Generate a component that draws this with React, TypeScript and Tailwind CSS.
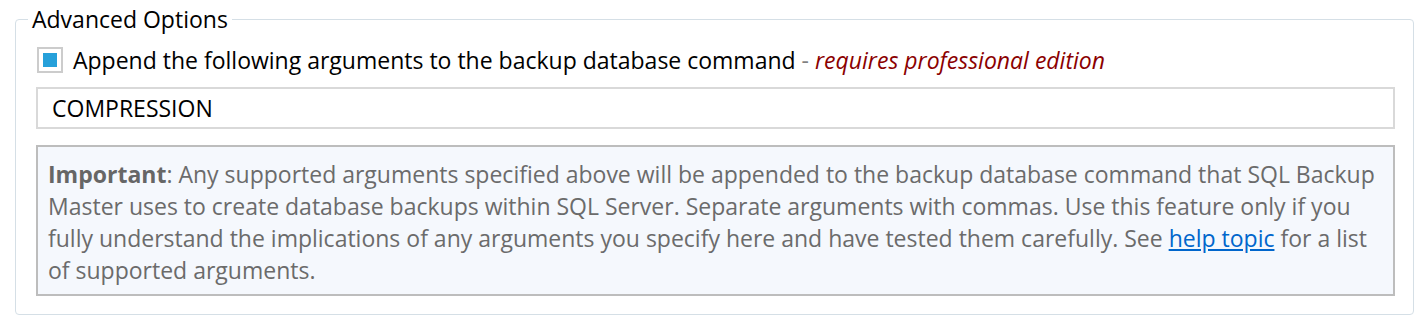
export default function App() {
  return (
    <div
      className="w-[1425px] h-[322px] bg-white pt-[6px] pl-[15px]"
      style={{ fontFamily: '"Open Sans", "Noto Sans", sans-serif' }}
    >
      <fieldset className="w-[1399px] h-[309px] border border-[#d5dfe6] rounded-[4px] pl-[20px] pr-[18px] m-0">
        <legend className="ml-[-8px] px-[4px] text-[23px] leading-[27px] text-black">
          Advanced Options
        </legend>

        <label className="flex items-center gap-[10px] mt-[12px] text-[23px] leading-[30px] text-black">
          <span className="w-[26px] h-[26px] border-2 border-[#cccccc] flex items-center justify-center shrink-0 ml-[1px]">
            <span className="w-[14px] h-[14px] bg-[#26a0da]" />
          </span>
          <span>
            Append the following arguments to the backup database command
            <span className="text-[#808080]"> - </span>
            <span className="italic text-[#8b0000]">requires professional edition</span>
          </span>
        </label>

        <div className="mt-[12px] h-[42px] border-2 border-[#d9d9d9] flex items-center px-[14px] text-[23px] text-black">
          COMPRESSION
        </div>

        <div className="mt-[16px] h-[151px] border-2 border-[#bdbdbd] bg-[#f5f8fd] px-[10px] pt-[11px] text-[23px] leading-[32px] text-[#6b6b6b]">
          <b className="font-bold text-[#666666]">Important</b>: Any supported arguments specified above will be
          appended to the backup database command that SQL Backup Master uses to create database backups within SQL
          Server. Separate arguments with commas. Use this feature only if you fully understand the implications of
          any arguments you specify here and have tested them carefully. See{" "}
          <a href="#" className="text-[#0066cc] underline">
            help topic
          </a>{" "}
          for a list of supported arguments.
        </div>
      </fieldset>
    </div>
  );
}
